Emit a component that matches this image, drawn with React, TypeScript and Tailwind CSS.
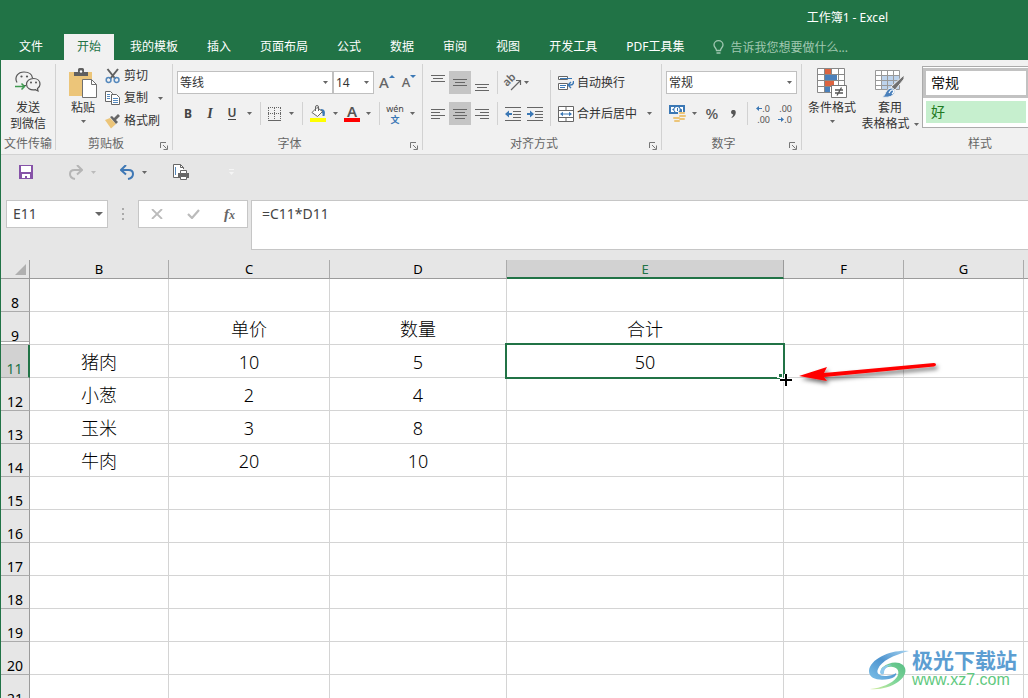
import type { ReactNode } from "react";
import clsx from "clsx";

const TABS = ["我的模板", "插入", "页面布局", "公式", "数据", "审阅", "视图", "开发工具", "PDF工具集"];

const COLUMNS = [
  { id: "B", width: "w-[139px]" },
  { id: "C", width: "w-[161px]" },
  { id: "D", width: "w-[177px]" },
  { id: "E", width: "w-[277px]" },
  { id: "F", width: "w-[120px]" },
  { id: "G", width: "w-[120px]" },
  { id: "", width: "" },
];

const ROWS: { row: number; values: string[] }[] = [
  { row: 8, values: [] },
  { row: 9, values: ["", "单价", "数量", "合计"] },
  { row: 11, values: ["猪肉", "10", "5", "50"] },
  { row: 12, values: ["小葱", "2", "4"] },
  { row: 13, values: ["玉米", "3", "8"] },
  { row: 14, values: ["牛肉", "20", "10"] },
  { row: 15, values: [] },
  { row: 16, values: [] },
  { row: 17, values: [] },
  { row: 18, values: [] },
  { row: 19, values: [] },
  { row: 20, values: [] },
  { row: 21, values: [] },
];

function Caret({ className = "text-[#666]" }: { className?: string }) {
  return (
    <svg width="5" height="3" viewBox="0 0 5 3" className={className}>
      <path d="M0 0h5L2.5 3z" fill="currentColor" />
    </svg>
  );
}

function CaretButton({ label, className }: { label: string; className?: string }) {
  return (
    <button aria-label={label} className={clsx("flex h-[23px] w-[13px] items-center justify-center", className)}>
      <Caret />
    </button>
  );
}

function ToolButton({
  label,
  active,
  className = "w-[22px]",
  children,
}: {
  label: string;
  active?: boolean;
  className?: string;
  children: ReactNode;
}) {
  return (
    <button
      aria-label={label}
      className={clsx("flex h-[23px] shrink-0 items-center justify-center", active && "bg-[#c5c5c5]", className)}
    >
      {children}
    </button>
  );
}

function Divider({ className = "mx-1 h-[23px]" }: { className?: string }) {
  return <div className={clsx("w-px shrink-0 bg-[#d2d2d2]", className)} />;
}

function Group({
  title,
  width,
  launcher,
  children,
}: {
  title: string;
  width: string;
  launcher?: boolean;
  children: ReactNode;
}) {
  return (
    <>
      <section className={clsx("flex shrink-0 flex-col", width)}>
        <div className="flex h-[70px]">{children}</div>
        <div className={clsx("relative h-5 text-center leading-5 whitespace-nowrap text-[#666]", launcher && "pr-4")}>
          {title}
          {launcher && (
            <button aria-label={`${title}设置`} className="absolute right-1 bottom-1">
              <svg width="8" height="8" viewBox="0 0 8 8" fill="none" stroke="#777">
                <path d="M.5 6V.5H6M3 3l3.5 3.5M7.5 3.5v4h-4" />
              </svg>
            </button>
          )}
        </div>
      </section>
      <Divider className="h-[86px]" />
    </>
  );
}

function Combo({ label, value, width }: { label: string; value: string; width: string }) {
  return (
    <div className={clsx("relative h-[23px]", width)}>
      <select
        aria-label={label}
        defaultValue={value}
        className="h-full w-full appearance-none border border-[#c0c0c0] bg-white pl-[2px] text-[#333]"
      >
        <option>{value}</option>
      </select>
      <Caret className="pointer-events-none absolute top-[10px] right-[5px] text-[#666]" />
    </div>
  );
}

/* 每条线: [x, y, 长度] */
function Lines({ lines }: { lines: [number, number, number][] }) {
  return (
    <svg width="14" height="16" viewBox="0 0 14 16" fill="#666">
      {lines.map(([x, y, w]) => (
        <rect key={y} x={x} y={y} width={w} height="1" />
      ))}
    </svg>
  );
}

function IndentIcon({ right }: { right?: boolean }) {
  return (
    <svg width="16" height="14" viewBox="0 0 16 14">
      <path d="M0 .5h16M8 4.5h8M8 7.5h8M8 10.5h8M0 13.5h16" stroke="#666" />
      {right ? (
        <path d="M0 6h3V3.500l4 3.500-4 3.500V8H0z" fill="#3b78b5" />
      ) : (
        <path d="M7 6H4V3.500L0 7l4 3.500V8h3z" fill="#3b78b5" />
      )}
    </svg>
  );
}

function WechatIcon() {
  return (
    <svg width="26" height="22" viewBox="0 0 26 22" fill="none" stroke="#555" strokeWidth="1.2">
      <path d="M11 14.500H8M2 11.500C-1 6 3 1 9 1c5 0 8 2.500 8.500 6" />
      <path d="M18.500 7.500c4 0 6.500 2.500 6.500 5.700 0 1.800-1 3.400-2.500 4.400l.5 2.400-2.600-1.300c-5 1-8.900-1.600-8.900-5.500 0-3.200 3-5.700 7-5.700z" />
      <path d="M0 15.500h9M6.500 12.500l3 3-3 3" stroke="#3f9a50" strokeWidth="1.500" />
      <g fill="#555" stroke="none">
        <circle cx="6.500" cy="5.500" r="1.100" />
        <circle cx="12" cy="5.500" r="1.100" />
        <circle cx="16" cy="11.500" r="1" />
        <circle cx="21" cy="11.500" r="1" />
      </g>
    </svg>
  );
}

function PasteIcon() {
  return (
    <svg width="30" height="30" viewBox="0 0 30 30">
      <path d="M1 4h23v24H1z" fill="#ecc579" />
      <path d="M6 8V4h4V1.500Q10 0 11.500 0h3Q16 0 16 1.500V4h4v4z" fill="#606060" />
      <circle cx="13" cy="3.500" r="1.200" fill="#fff" />
      <path d="M14.500 11.500h9l5 5v13h-14z" fill="#fff" stroke="#707070" />
      <path d="M23.500 11.500v5h5" fill="none" stroke="#707070" />
    </svg>
  );
}

function CutIcon() {
  return (
    <svg width="16" height="16" viewBox="0 0 16 16" fill="none">
      <path d="M2.500 1l8 10M13 1L5 11" stroke="#606060" strokeWidth="2" />
      <circle cx="3.600" cy="12" r="2.400" stroke="#5589bd" strokeWidth="1.500" />
      <circle cx="11.600" cy="12" r="2.400" stroke="#5589bd" strokeWidth="1.500" />
    </svg>
  );
}

function CopyIcon() {
  return (
    <svg width="16" height="16" viewBox="0 0 16 16" fill="#fff">
      <path d="M.5 1.500h5l2 2v8h-7z" stroke="#666" />
      <path d="M2 4.500h3M2 6.500h3M2 8.500h3" stroke="#5589bd" />
      <path d="M6.500 4.500h5l3 3v7h-8z" stroke="#666" />
      <path d="M8 8.500h5M8 10.500h5M8 12.500h5" stroke="#5589bd" />
    </svg>
  );
}

function BrushIcon() {
  return (
    <svg width="16" height="16" viewBox="0 0 16 16">
      <path d="M0 7l5-2 6 6-5 4.500z" fill="#ecc579" />
      <path d="M5 4l2-1 2 2 4-4 2 2-4 4 2 2-2 2z" fill="#666" />
    </svg>
  );
}

function BucketIcon() {
  return (
    <svg width="16" height="17" viewBox="0 0 16 17">
      <path d="M11 4c4 0 4.500 3 3.500 7h-2c.5-3-.5-4-3-5z" fill="#3b78b5" />
      <path d="M2 7.500L7 2.500l5.500 4-5 5z" fill="#fff" stroke="#666" />
      <path d="M5.500 6V2Q5.500.5 7 .5T8.500 2v4" fill="none" stroke="#666" />
      <path d="M0 13h16v4H0z" fill="#ff0" />
    </svg>
  );
}

function WrapIcon() {
  return (
    <svg width="16" height="16" viewBox="0 0 16 16" fill="none">
      <path d="M.5 1.500h9v3h-9zM.5 8.500h9v6h-9z" fill="#fff" stroke="#666" />
      <path d="M2 3.500h12M2 10.500h6M2 12.500h5" stroke="#3b78b5" />
      <path d="M15.500 6v1q0 3-3 3H11M13 7l-3 3 3 3" stroke="#3b78b5" strokeWidth="1.400" />
    </svg>
  );
}

function MergeIcon() {
  return (
    <svg width="16" height="16" viewBox="0 0 16 16" fill="none">
      <path d="M.5.5h15v15H.5z" fill="#fff" stroke="#666" />
      <path d="M.5 4.500h15M.5 11.500h15M8 .5v4M8 11.500v4" stroke="#666" />
      <path d="M3 8h10" stroke="#3b78b5" />
      <path d="M5 5.800V10.200L2 8zM11 5.800V10.200L14 8z" fill="#3b78b5" />
    </svg>
  );
}

function MoneyIcon() {
  return (
    <svg width="17" height="17" viewBox="0 0 17 17">
      <path d="M0 0h16v9H0z" fill="#3b78b5" />
      <path d="M2 2h3v1L3 4.500 5 6v1H2zM14 2h-3v1l2 1.500V7h1z" fill="#fff" />
      <circle cx="8" cy="4.500" r="2.600" fill="#fff" />
      <path d="M8 3h1v3H8z" fill="#3b78b5" />
      <path d="M9 7h8v10H9zM3 11h8v6H3z" fill="#f1f1f1" />
      <g fill="#ecc579">
        <rect x="10" y="7" width="6" height="2" rx="1" />
        <rect x="10" y="10" width="7" height="2" rx="1" />
        <rect x="10" y="13" width="6" height="2" rx="1" />
        <rect x="4" y="12" width="7" height="2" rx="1" />
        <rect x="5" y="15" width="6" height="2" rx="1" />
      </g>
    </svg>
  );
}

function ConditionalIcon() {
  return (
    <svg width="30" height="30" viewBox="0 0 30 30">
      <path d="M.5.5h27v24H.5z" fill="#fff" />
      <path d="M.5.5h27v24H.5zM.5 6.500h27M.5 12.500h27M.5 18.500h27M7.500.5v24M14.500.5v6M21.500.5v24" fill="none" stroke="#888" />
      <path d="M8 1h6v5H8zM8 13h9v5H8z" fill="#dd6440" />
      <path d="M8 7h12v5H8zM8 19h5v5H8z" fill="#4a80bb" />
      <path d="M14.500 17.500h15v12h-15z" fill="#fff" stroke="#777" />
      <path d="M18 22h8M18 25h8M24.500 19.500l-4.500 8" stroke="#555" strokeWidth="1.300" />
    </svg>
  );
}

function TableFormatIcon() {
  return (
    <svg width="30" height="30" viewBox="0 0 30 30">
      <path d="M.5 2.500h24v19H.5z" fill="#fff" />
      <path d="M7 7h17v15H7z" fill="#bdd3ec" />
      <path d="M.5 2.500h24v19H.5zM.5 7.500h24M.5 12.500h24M.5 17.500h24M6.500 2.500v19M12.500 2.500v19M18.500 2.500v19" fill="none" stroke="#999" />
      <path d="M29 7v4l-9 11-4-3z" fill="#707070" stroke="#f1f1f1" />
      <path d="M7 29c4-1 3-8 9-9 4 0 5 4 2 7-3 2.500-7 2.500-11 2z" fill="#4a80bb" stroke="#f1f1f1" />
      <path d="M14 25q2-4 4-3t-1 4" fill="none" stroke="#fff" strokeWidth="1.200" />
    </svg>
  );
}

function TitleBar() {
  return (
    <header className="bg-[#217346] text-white">
      <div className="flex h-[34px] justify-end pt-px pr-[140px] leading-[34px]">
        <h1>工作簿1 - Excel</h1>
      </div>
      <nav className="flex h-[26px] gap-[3px] leading-[23px] whitespace-nowrap">
        <button className="w-[60px] pb-[2px]">文件</button>
        <button className="bg-[#f1f1f1] px-[13px] pb-[2px] text-[#217346]">开始</button>
        {TABS.map((tab) => (
          <button key={tab} className="px-[13px] pb-[2px]">
            {tab}
          </button>
        ))}
        <button className="flex items-center gap-[6px] px-[13px] text-[#a0c8b1]">
          <svg width="11" height="14" viewBox="0 0 11 14" fill="none" stroke="currentColor" strokeWidth="1.300">
            <path d="M3.500 10.500C3.500 8 1 7.500 1 5a4.500 4.300 0 0 1 9 0c0 2.500-2.500 3-2.500 5.500zM3.500 13h4" />
          </svg>
          告诉我您想要做什么...
        </button>
      </nav>
    </header>
  );
}

function Ribbon() {
  return (
    <div className="flex h-[95px] overflow-hidden border-b border-[#d2d2d2] bg-[#f1f1f1] pt-1 text-[#333]">
      <Group title="文件传输" width="w-[54px]">
        <button className="flex flex-1 flex-col items-center pt-[7px] leading-4">
          <WechatIcon />
          <span className="mt-[7px]">发送</span>
          <span>到微信</span>
        </button>
      </Group>

      <Group title="剪贴板" width="w-[116px]" launcher>
        <button className="ml-3 flex w-[30px] flex-col items-center pt-1 leading-4">
          <PasteIcon />
          <span className="mt-[2px]">粘贴</span>
          <span className="mt-1">
            <Caret />
          </span>
        </button>
        <div className="ml-[7px] pt-px">
          <button className="flex h-[22px] items-center gap-[3px]">
            <CutIcon />
            剪切
          </button>
          <div className="flex">
            <button className="flex h-[22px] items-center gap-[3px]">
              <CopyIcon />
              复制
            </button>
            <CaretButton label="复制选项" className="ml-[6px]" />
          </div>
          <button className="flex h-[22px] items-center gap-[3px]">
            <BrushIcon />
            格式刷
          </button>
        </div>
      </Group>

      <Group title="字体" width="w-[249px]" launcher>
        <div className="flex flex-col gap-2 pt-[7px] pl-1">
          <div className="flex">
            <Combo label="字体名称" value="等线" width="w-[156px]" />
            <Combo label="字号" value="14" width="w-[41px]" />
            <ToolButton label="增大字号" className="ml-[2px] w-[22px]">
              <span className="text-[15px] font-medium text-[#666]">A</span>
              <svg width="6" height="3" className="mb-3">
                <path d="M0 3h6L3 0z" fill="#3b78b5" />
              </svg>
            </ToolButton>
            <ToolButton label="减小字号">
              <span className="text-[13px] font-medium text-[#666]">A</span>
              <svg width="6" height="3" className="mb-3">
                <path d="M0 0h6L3 3z" fill="#3b78b5" />
              </svg>
            </ToolButton>
          </div>
          <div className="flex text-[#444]">
            <ToolButton label="加粗">
              <b>B</b>
            </ToolButton>
            <ToolButton label="倾斜">
              <i className="font-['Liberation_Serif',serif] text-[14px] font-bold">I</i>
            </ToolButton>
            <ToolButton label="下划线">
              <span className="border-b border-[#444] leading-3 font-semibold">U</span>
            </ToolButton>
            <CaretButton label="下划线选项" />
            <Divider />
            <ToolButton label="边框" className="w-5">
              <svg width="14" height="14" viewBox="0 0 14 14" fill="none" stroke="#666">
                <path d="M0 .5h14M.5 1v12M6.500 1v12M12.500 1v12M0 6.500h14" strokeDasharray="1 1" />
                <path d="M0 13.500h13" />
              </svg>
            </ToolButton>
            <CaretButton label="边框选项" />
            <Divider />
            <ToolButton label="填充颜色">
              <BucketIcon />
            </ToolButton>
            <CaretButton label="填充颜色选项" />
            <ToolButton label="字体颜色" className="w-5">
              <span className="w-4 border-b-4 border-[#f00] text-[15px] leading-[13px] font-semibold text-[#555]">A</span>
            </ToolButton>
            <CaretButton label="字体颜色选项" />
            <Divider />
            <ToolButton label="拼音" className="w-[22px] flex-col">
              <span className="text-[9px] leading-[11px]">wén</span>
              <span className="text-[9px] leading-[11px] font-bold text-[#3b78b5]">文</span>
            </ToolButton>
            <CaretButton label="拼音选项" />
          </div>
        </div>
      </Group>

      <Group title="对齐方式" width="w-[238px]" launcher>
        <div className="flex flex-col gap-2 pt-[7px] pl-1">
          <div className="flex">
            <ToolButton label="顶端对齐">
              <Lines lines={[[0, 0, 14], [2, 3, 10], [0, 6, 14]]} />
            </ToolButton>
            <ToolButton label="垂直居中" active>
              <Lines lines={[[0, 4, 14], [2, 7, 10], [0, 10, 14]]} />
            </ToolButton>
            <ToolButton label="底端对齐">
              <Lines lines={[[0, 9, 14], [2, 12, 10], [0, 15, 14]]} />
            </ToolButton>
            <Divider />
            <ToolButton label="方向">
              <svg width="18" height="18" viewBox="0 0 18 18" className="overflow-visible">
                <text x="3" y="13" fontSize="11" fontWeight="600" fill="#666" transform="rotate(-45 3 13)">
                  ab
                </text>
                <path d="M7 16l9-9M12 6.500h4.500V11" fill="none" stroke="#666" strokeWidth="1.200" />
              </svg>
            </ToolButton>
            <CaretButton label="方向选项" className="-ml-1" />
          </div>
          <div className="flex">
            <ToolButton label="左对齐">
              <Lines lines={[[0, 3, 14], [0, 6, 9], [0, 9, 14], [0, 12, 9]]} />
            </ToolButton>
            <ToolButton label="居中" active>
              <Lines lines={[[0, 3, 14], [2, 6, 10], [0, 9, 14], [2, 12, 10]]} />
            </ToolButton>
            <ToolButton label="右对齐">
              <Lines lines={[[0, 3, 14], [5, 6, 9], [0, 9, 14], [5, 12, 9]]} />
            </ToolButton>
            <Divider />
            <ToolButton label="减少缩进量">
              <IndentIcon />
            </ToolButton>
            <ToolButton label="增加缩进量">
              <IndentIcon right />
            </ToolButton>
          </div>
        </div>
        <Divider className="mx-1 mt-[6px] h-14" />
        <div className="flex flex-col gap-2 pt-[7px] pl-[3px]">
          <button className="flex h-[23px] items-center gap-[3px]">
            <WrapIcon />
            自动换行
          </button>
          <div className="flex">
            <button className="flex h-[23px] items-center gap-[3px]">
              <MergeIcon />
              合并后居中
            </button>
            <CaretButton label="合并选项" className="ml-[6px]" />
          </div>
        </div>
      </Group>

      <Group title="数字" width="w-[139px]" launcher>
        <div className="flex flex-col gap-2 pt-[7px] pl-1">
          <Combo label="数字格式" value="常规" width="w-[131px]" />
          <div className="flex text-[#555]">
            <ToolButton label="会计数字格式">
              <MoneyIcon />
            </ToolButton>
            <CaretButton label="会计数字格式选项" />
            <ToolButton label="百分比样式">
              <span className="text-[15px] font-medium">%</span>
            </ToolButton>
            <ToolButton label="千位分隔样式" className="w-5">
              <svg width="5" height="8" viewBox="0 0 5 8" fill="#555">
                <path d="M0 2.200a2.300 2.200 0 0 1 4.800 0C4.800 5 3 7 .8 8L.5 7.200Q2 6 2.200 4.500 0 4.300 0 2.200z" />
              </svg>
            </ToolButton>
            <Divider />
            <ToolButton label="增加小数位数" className="w-[22px] flex-col">
              <span className="flex items-center text-[9px] leading-[11px]">
                <svg width="6" height="5" viewBox="0 0 6 5" fill="#3b78b5">
                  <path d="M0 2.500L3 0v2h3v1H3v2z" />
                </svg>
                .0
              </span>
              <span className="self-end pr-[4px] text-[9px] leading-[11px]">.00</span>
            </ToolButton>
            <ToolButton label="减少小数位数" className="w-[22px] flex-col">
              <span className="self-end pr-[4px] text-[9px] leading-[11px]">.00</span>
              <span className="flex items-center text-[9px] leading-[11px]">
                <svg width="6" height="5" viewBox="0 0 6 5" fill="#3b78b5">
                  <path d="M6 2.500L3 0v2H0v1h3v2z" />
                </svg>
                .0
              </span>
            </ToolButton>
          </div>
        </div>
      </Group>

      <Group title="样式" width="w-[356px]">
        <button className="ml-1 flex w-[52px] flex-col items-center pt-1 leading-4">
          <ConditionalIcon />
          <span className="mt-[2px]">条件格式</span>
          <span className="mt-1">
            <Caret />
          </span>
        </button>
        <button className="ml-[2px] flex w-[60px] flex-col items-center pt-1 leading-4">
          <TableFormatIcon />
          <span className="mt-[2px]">套用</span>
          <span className="flex items-center gap-1">
            表格格式
            <Caret />
          </span>
        </button>
        <div className="mt-[2px] ml-[2px] h-[62px] flex-1 border border-[#ababab] bg-white pt-px text-[14px]">
          <button className="block h-[30px] w-[106px] border-[3px] border-[#c2c2c2] bg-white pb-[2px] pl-[5px] text-left text-[#111]">
            常规
          </button>
          <button className="mt-[3px] ml-[3px] block h-[22px] w-[100px] bg-[#c6efce] pl-[5px] text-left leading-5 text-[#217a21]">
            好
          </button>
        </div>
      </Group>
    </div>
  );
}

function QuickAccess() {
  const arrow = "M1 5h7.500q4.500 0 4.500 4t-5 5M6 0L1 5l5 4.500";
  return (
    <div className="mb-[11px] flex h-[34px] items-center">
      <ToolButton label="保存" className="ml-[14px] w-[22px]">
        <svg width="14" height="14" viewBox="0 0 14 14">
          <path d="M0 0h14v14H0z" fill="#8653a8" />
          <path d="M2 1h10v6H2zM3 9h8v4H8v-2H6v2H3z" fill="#fff" />
        </svg>
      </ToolButton>
      <ToolButton label="恢复" className="ml-7 w-[22px]">
        <svg width="14" height="15" viewBox="0 0 14 15" fill="none" stroke="#b5b5b5" strokeWidth="2">
          <path d={arrow} transform="matrix(-1 0 0 1 14 0)" />
        </svg>
      </ToolButton>
      <button aria-label="恢复选项" className="flex h-[23px] w-[13px] items-center justify-center">
        <Caret className="text-[#bbb]" />
      </button>
      <ToolButton label="撤消" className="ml-4 w-[22px]">
        <svg width="14" height="15" viewBox="0 0 14 15" fill="none" stroke="#3f78b5" strokeWidth="2">
          <path d={arrow} />
        </svg>
      </ToolButton>
      <CaretButton label="撤消选项" />
      <ToolButton label="打印预览" className="ml-[19px] w-[22px]">
        <svg width="16" height="16" viewBox="0 0 16 16" fill="none">
          <path d="M10.500 5V3.500l-3-3h-7v13H5" fill="#fff" stroke="#666" />
          <path d="M7.500.5v3h3" stroke="#666" />
          <path d="M2.500 3v8" stroke="#5589bd" />
          <path d="M5 9h11v5H5z" fill="#666" />
          <path d="M7.500 6.500h6v3h-6zM7.500 12.500h6v3h-6z" fill="#fff" stroke="#666" />
        </svg>
      </ToolButton>
      <ToolButton label="自定义快速访问工具栏" className="ml-7 w-[22px]">
        <svg width="5" height="7" viewBox="0 0 5 7" fill="#f5f5f5">
          <path d="M0 0h5v1H0zM0 3h5L2.500 6z" />
        </svg>
      </ToolButton>
    </div>
  );
}

function FormulaBar() {
  return (
    <div className="flex h-[60px] items-start text-[14px] text-[#444]">
      <div className="relative ml-[5px]">
        <input
          aria-label="名称框"
          defaultValue="E11"
          className="block h-7 w-[102px] border border-[#c6c6c6] bg-white pb-[2px] pl-[6px]"
        />
        <svg width="8" height="4" className="pointer-events-none absolute top-3 right-[5px]">
          <path d="M0 0h8L4 4z" fill="#666" />
        </svg>
      </div>
      <svg width="30" height="28" viewBox="0 0 30 28" fill="#aaa">
        <path d="M14 8h2v2h-2zM14 13h2v2h-2zM14 18h2v2h-2z" />
      </svg>
      <div className="flex h-7 w-[110px] items-center justify-around border border-[#c6c6c6] bg-white">
        <button aria-label="取消">
          <svg width="12" height="10" viewBox="0 0 12 10" stroke="#bbb" strokeWidth="1.800">
            <path d="M1 0l10 10M11 0L1 10" />
          </svg>
        </button>
        <button aria-label="输入">
          <svg width="13" height="10" viewBox="0 0 13 10" fill="none" stroke="#bbb" strokeWidth="2.200">
            <path d="M1 5l4 4 7-8" />
          </svg>
        </button>
        <button
          aria-label="插入函数"
          className="font-['Liberation_Serif',serif] text-[15px] leading-4 font-bold text-[#666] italic"
        >
          f<span className="text-[12px]">x</span>
        </button>
      </div>
      <textarea
        aria-label="编辑栏"
        defaultValue="=C11*D11"
        className="ml-[3px] block h-[50px] flex-1 resize-none border border-r-0 border-[#c6c6c6] bg-white py-[3px] pl-[10px] leading-5"
      />
    </div>
  );
}

/* 活动单元格边框、十字光标和红色箭头 */
function ActiveCell() {
  return (
    <div className="pointer-events-none absolute -inset-[2px] z-10 border-2 border-[#217346]">
      <svg width="170" height="50" viewBox="0 0 170 50" className="absolute -right-[161px] -bottom-[28px]">
        <defs>
          <filter id="arrow-shadow" x="-20%" y="-100%" width="140%" height="400%">
            <feDropShadow dx="2" dy="3" stdDeviation="2" floodColor="#000" floodOpacity=".55" />
          </filter>
        </defs>
        <path d="M3 17h6v6H3z" fill="#fff" />
        <path d="M5 19h3v3H5z" fill="#217346" />
        <path d="M6 23h4v-4h4v4h4v4h-4v4h-4v-4H6z" fill="#fff" />
        <path d="M6 24h5v-5h2v5h5v2h-5v5h-2v-5H6z" fill="#000" />
        <path d="M25 21L53 12l-3 6 110-10q2 0 2 1.500t-2 2L50 22l3 4z" fill="#f00" filter="url(#arrow-shadow)" />
      </svg>
    </div>
  );
}

function Sheet() {
  return (
    <table className="w-full table-fixed border-separate border-spacing-0 text-center text-black">
      <colgroup>
        <col className="w-[29px]" />
        {COLUMNS.map((col) => (
          <col key={col.id} className={col.width} />
        ))}
      </colgroup>
      <thead className="text-[13px] leading-[17px]">
        <tr className="h-[19px]">
          <th aria-label="全选" className="border-r border-b border-[#9b9b9b] bg-[#e6e6e6] p-0">
            <svg width="11" height="11" className="ml-[14px]">
              <path d="M11 0v11H0z" fill="#b0b0b0" />
            </svg>
          </th>
          {COLUMNS.map((col) => (
            <th
              key={col.id}
              scope="col"
              className={clsx(
                "border-r p-0 pt-px font-normal last:border-r-0",
                col.id === "E"
                  ? "border-b-2 border-r-[#9b9b9b] border-b-[#217346] bg-[#d2d2d2] leading-4 text-[#217346]"
                  : "border-b border-r-[#ababab] border-b-[#9b9b9b] bg-[#e6e6e6]",
              )}
            >
              {col.id}
            </th>
          ))}
        </tr>
      </thead>
      <tbody>
        {ROWS.map(({ row, values }) => (
          <tr key={row} className="h-[33px]">
            <th
              scope="row"
              className={clsx(
                "relative p-0 pt-4 text-[14px] leading-4 font-normal",
                row === 11
                  ? "border-r-2 border-b border-r-[#217346] border-b-[#ababab] bg-[#d2d2d2] text-[#217346]"
                  : "border-r border-b border-r-[#9b9b9b] border-b-[#ababab] bg-[#e6e6e6]",
              )}
            >
              {row}
              {row === 9 && <div className="absolute inset-x-0 bottom-0 h-[3px] border-t border-[#ababab] bg-white" />}
            </th>
            {COLUMNS.map((col, i) => (
              <td
                key={col.id}
                className="relative border-r border-b border-[#d4d4d4] p-0 pt-[2px] text-[18px] leading-[30px] font-light last:border-r-0"
              >
                {values[i]}
                {row === 11 && col.id === "E" && <ActiveCell />}
              </td>
            ))}
          </tr>
        ))}
      </tbody>
    </table>
  );
}

function Watermark() {
  return (
    <div className="absolute right-[11px] bottom-[7px] z-20 flex items-center gap-[2px]">
      <svg width="42" height="42" viewBox="0 0 42 42">
        <defs>
          <linearGradient id="swirl-blue" x1="0" y1="1" x2="1" y2="0">
            <stop offset="0" stopColor="#7cc0e8" />
            <stop offset=".5" stopColor="#4e94cf" />
            <stop offset="1" stopColor="#a6d3f0" />
          </linearGradient>
          <linearGradient id="swirl-green" x1="0" y1="1" x2="1" y2="0">
            <stop offset="0" stopColor="#d5eea0" />
            <stop offset=".5" stopColor="#7ed69a" />
            <stop offset="1" stopColor="#58bd84" />
          </linearGradient>
        </defs>
        <path
          d="M41 2C25 0 2 9 1 22c0 8 10 10 20 8 5-1 8-4 7-6-2 2-7 3-11 3-6 0-9-3-7-7C13 12 26 6 41 2z"
          fill="url(#swirl-blue)"
        />
        <path
          d="M15 18c6-5 15-6 20-2 5 5 2 12-5 17-7 5-18 8-28 7 11-1 22-5 27-12 3-5 1-9-4-10-4-1-7 0-10 3-2 1-3-1 0-3z"
          fill="url(#swirl-green)"
        />
        <path d="M12 23c1-5 7-8 12-7-5 1-8 4-8 8 0 2-4 2-4-1z" fill="#8ec8ec" />
      </svg>
      <div className="font-bold whitespace-nowrap">
        <div className="text-[21px] leading-5 text-[#5c9ed2]">极光下载站</div>
        <div className="font-['Liberation_Sans',sans-serif] text-[16px] leading-5 font-normal text-[#5fc980]">
          www.xz7.com
        </div>
      </div>
    </div>
  );
}

export default function App() {
  return (
    <div className="relative h-screen overflow-hidden border-l border-[#217346] bg-white font-['Noto_Sans','Noto_Sans_CJK_SC',sans-serif] text-[12px]">
      <TitleBar />
      <Ribbon />
      <div className="bg-[#e6e6e6]">
        <QuickAccess />
        <FormulaBar />
      </div>
      <Sheet />
      <Watermark />
    </div>
  );
}
